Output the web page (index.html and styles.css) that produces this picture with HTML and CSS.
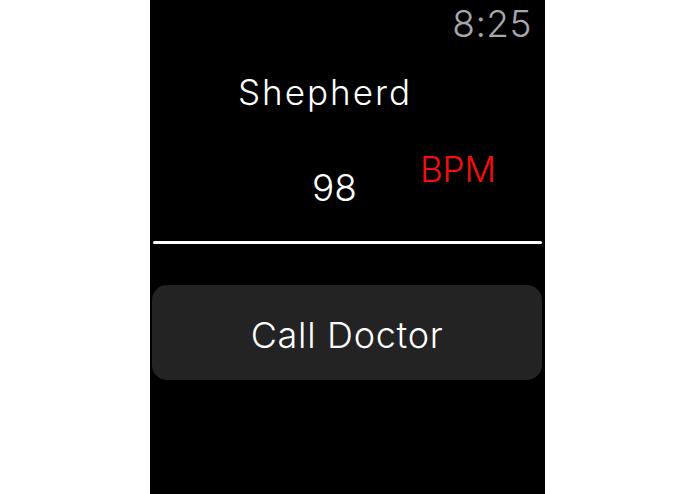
FILE: index.html
```html
<!DOCTYPE html>
<html lang="en">
<head>
    <meta charset="UTF-8">
    <title>Shepherd</title>
    <link rel="stylesheet" href="styles.css">
</head>
<body>

<div class="watch-screen">
    <div class="status-bar">
        <span class="clock">8:25</span>
    </div>

    <h2 class="patient-name">Shepherd</h2>

    <div class="heart-rate">
        <span class="bpm-value">98</span>
        <span class="bpm-label">BPM</span>
    </div>

    <div class="divider"></div>

    <button type="button" class="call-button">Call Doctor</button>
</div>

</body>
</html>
```

FILE: styles.css
```css
/* Global styles */
body {
    background: #ffffff;
    margin: 0;
    padding: 0;
    font-family: 'Inter', 'Liberation Sans', sans-serif;
}

.watch-screen {
    width: 395px;
    height: 494px;
    margin: 0 auto;
    background: #000000;
    box-sizing: border-box;
    padding: 5px 3px 0 2px;
    display: flex;
    flex-direction: column;
    color: #ffffff;
    overflow: hidden;
}

.status-bar {
    display: flex;
    justify-content: flex-end;
    padding-right: 10px;
}

.clock {
    font-size: 37px;
    font-weight: 300;
    line-height: 37px;
    letter-spacing: 0.5px;
    color: #a6a6ad;
}

.patient-name {
    margin: 33px 0 0 0;
    padding-right: 44px;
    text-align: center;
    font-size: 35px;
    font-weight: 300;
    line-height: 35px;
    letter-spacing: 2px;
}

/* heart rate row: value sits lower than the red label */
.heart-rate {
    display: flex;
    align-items: flex-start;
    gap: 63px;
    margin-top: 42px;
    padding-left: 160px;
}

.bpm-value {
    margin-top: 17px;
    font-size: 37px;
    font-weight: 300;
    line-height: 37px;
}

.bpm-label {
    font-size: 35px;
    font-weight: 300;
    line-height: 35px;
    color: #f70d0d;
}

.divider {
    height: 3px;
    margin-top: 35px;
    margin-left: 1px;
    background: #ffffff;
    border-radius: 2px;
}

.call-button {
    margin-top: 41px;
    height: 95px;
    padding: 4px 0 0 0;
    border: none;
    border-radius: 15px;
    background: #232323;
    color: #ffffff;
    font-family: inherit;
    font-size: 36px;
    font-weight: 300;
    letter-spacing: 0.7px;
    cursor: pointer;
}
```
